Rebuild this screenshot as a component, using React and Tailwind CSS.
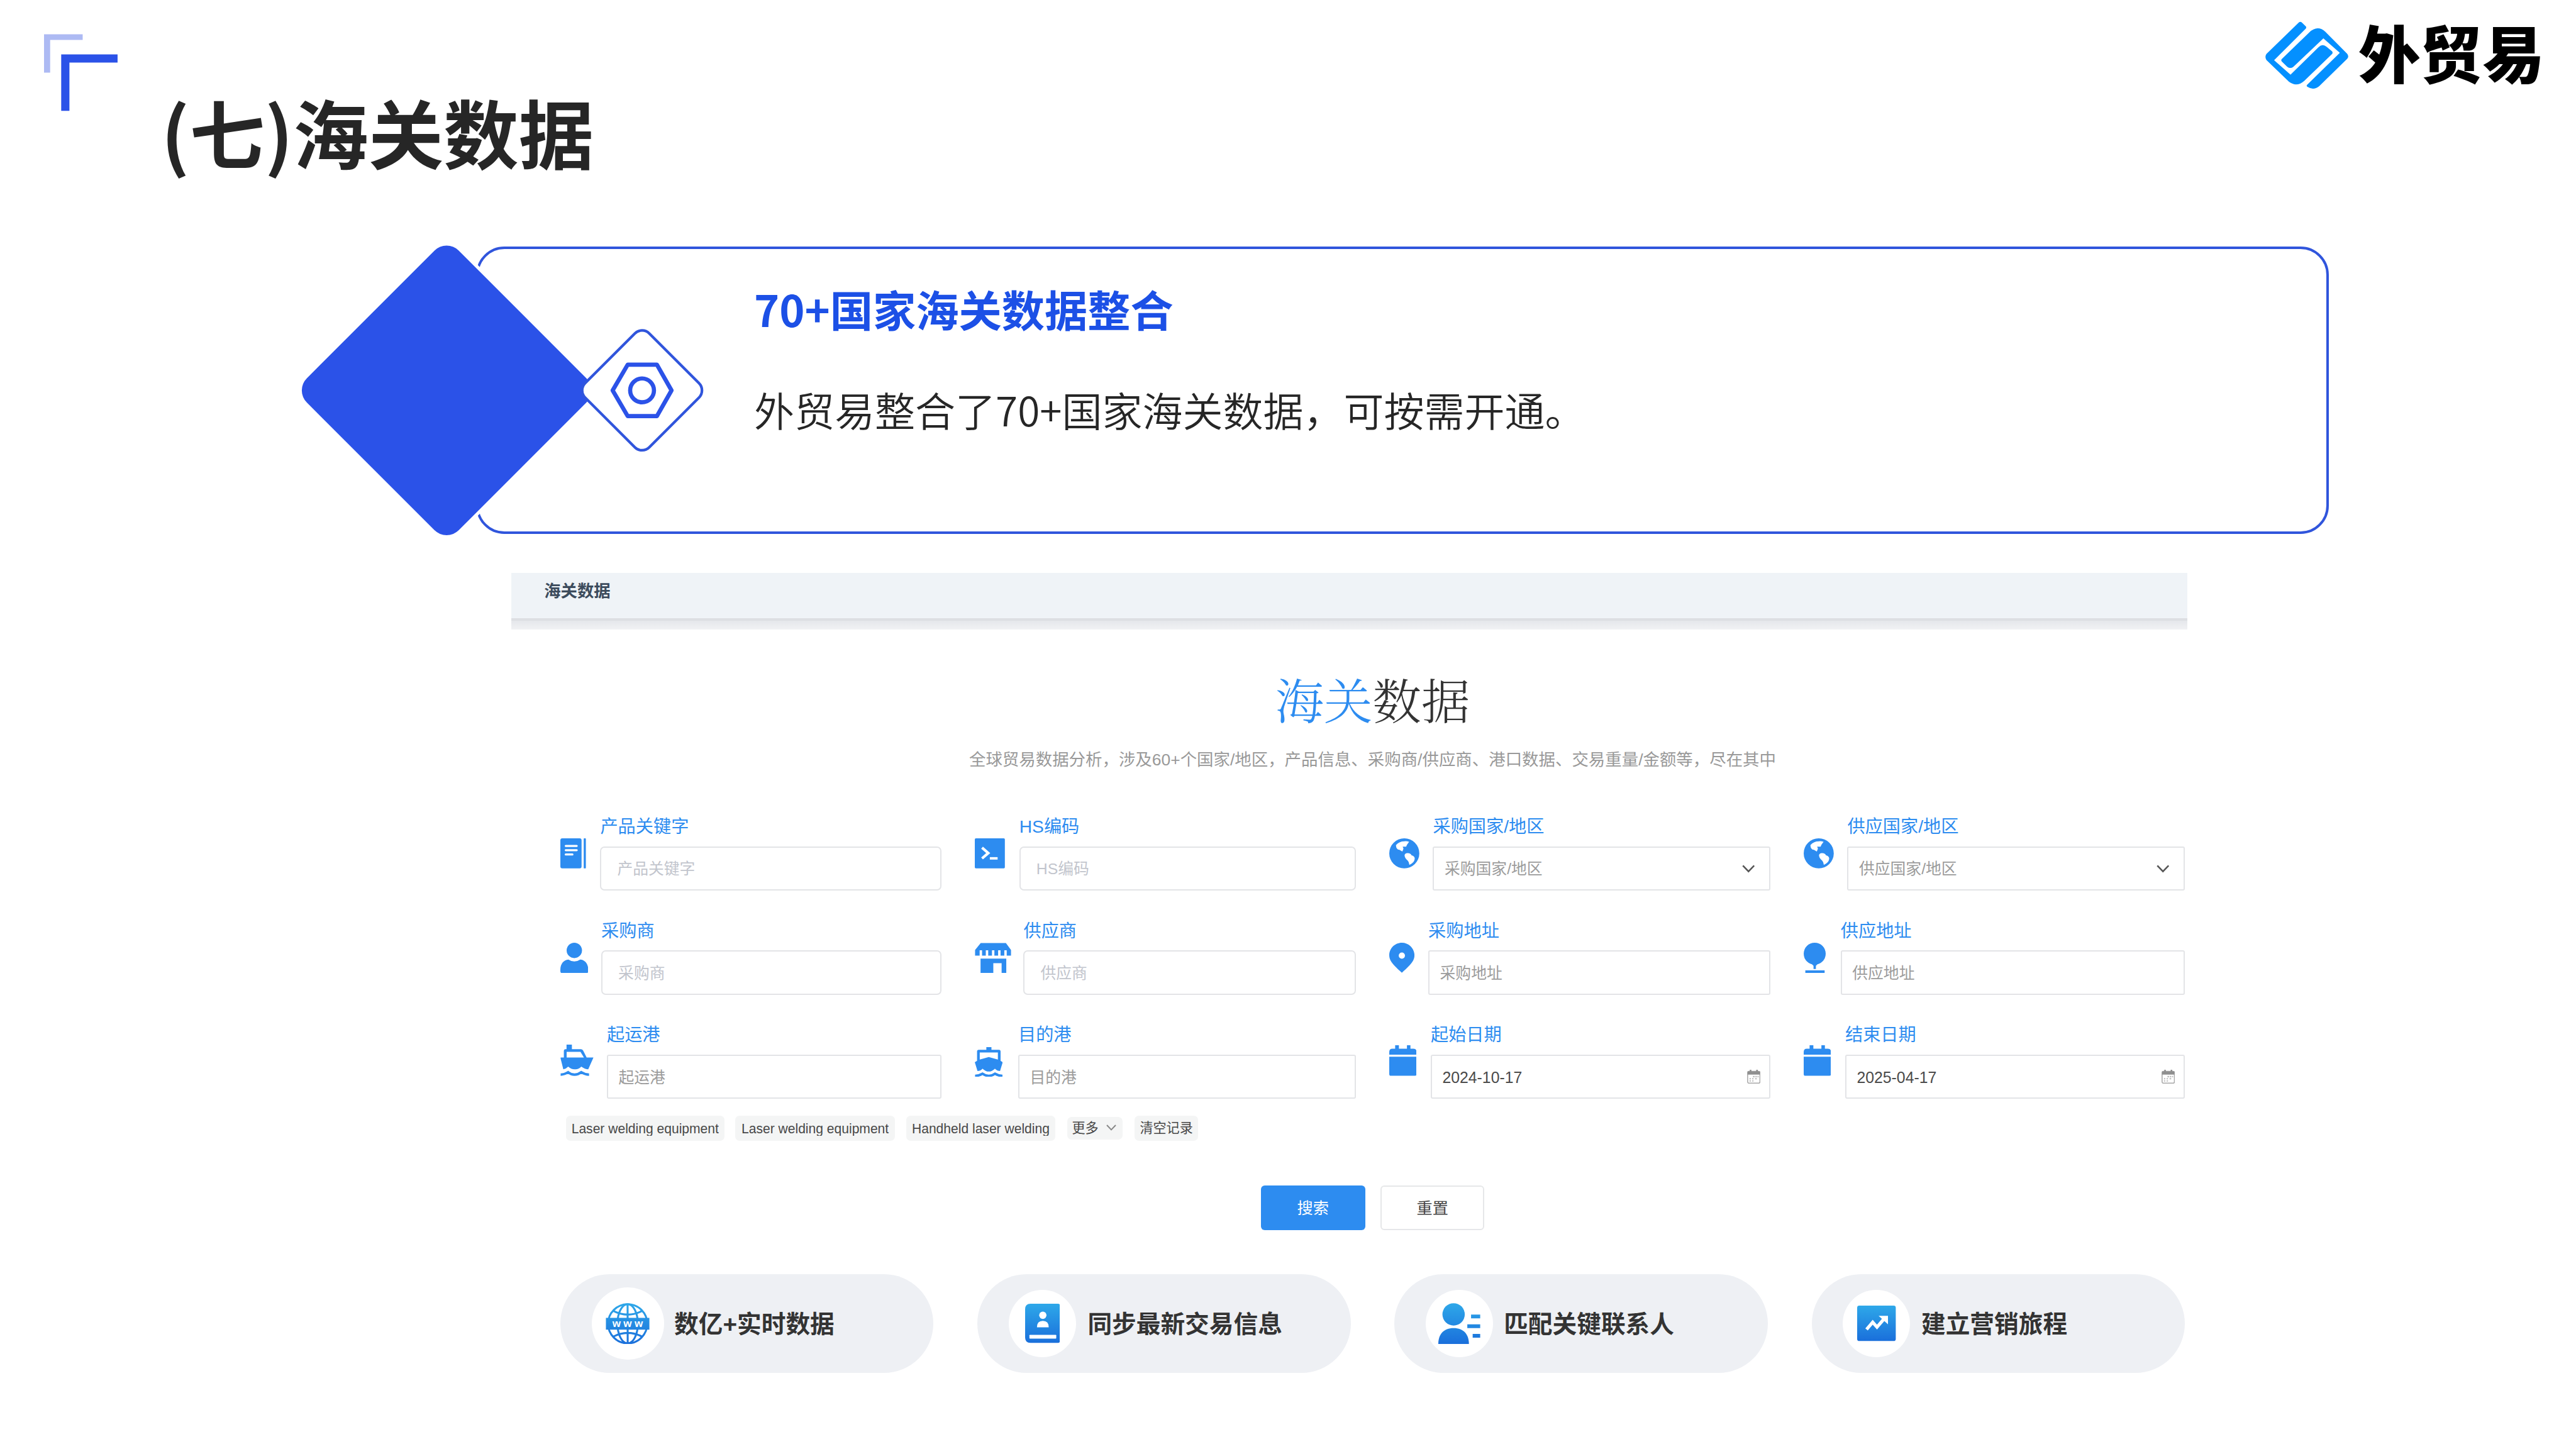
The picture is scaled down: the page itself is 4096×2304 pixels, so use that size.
const BLUE = '#2d8cf0';

function Brackets() {
  return (
    <svg viewBox="82 63 138 144" className="w-[117.8px] h-[122.9px]">
      <path d="M82 63.7h72v10.4H93.4v61H82z" fill="#adbaf3" />
      <path d="M114 101h105v15.2h-89.700v90H114z" fill="#2b52e8" />
    </svg>
  );
}

function LogoMark() {
  return (
    <svg viewBox="147 120 387.1 384" preserveAspectRatio="none" className="w-[134.8px] h-[109.2px]" fill="#0490ff">
      <path d="M302 127Q310 118 318 128L335 148Q339 155 334 161L190 337L265 418L393 264Q411 243 430 262L455 288Q459 295 455 302L328 452Q293 490 258 458L155 336Q146 318 155 302Z" />
      <path d="M350 182Q388 138 424 178L523 300Q534 315 523 330L396 482Q370 508 342 486Q336 480 341 474L490 296L415 215L278 374Q264 387 250 374L225 344Q220 336 226 329Z" />
    </svg>
  );
}

function DiamondArt() {
  return (
    <svg viewBox="556 450 762 556" className="absolute -left-[282.5px] -top-[8px] w-[650.2px] h-[474.5px]">
      <rect x="631.4" y="527.2" width="400.4" height="400.4" rx="32" transform="rotate(45 831.6 727.4)" fill="#2b52e8" stroke="#fff" strokeWidth="12" paintOrder="stroke" />
      <rect x="1111.3" y="642.900" width="169" height="169" rx="19" transform="rotate(45 1195.8 727.4)" fill="#fff" stroke="#3055dc" strokeWidth="5" />
      <path d="M1141 727.4L1169 679.5H1223.500L1250.700 727.4L1223.500 775.400H1169Z" fill="none" stroke="#2b52e8" strokeWidth="7.800" strokeLinejoin="round" />
      <circle cx="1195.8" cy="727.4" r="22.2" fill="none" stroke="#2b52e8" strokeWidth="7.800" />
    </svg>
  );
}

/* ---------- field icons ---------- */

function IconBook() {
  return (
    <svg viewBox="0 0 48 56" className="w-[41px] h-[47.800px]" fill={BLUE}>
      <rect width="39.500" height="56" rx="3.500" />
      <rect x="43.500" width="4" height="56" rx="1" />
      <path d="M10 14.100H30.500M10 22.100H30.500M10 30.100H22.500" stroke="#fff" strokeWidth="3.800" strokeLinecap="round" />
    </svg>
  );
}

function IconPerson() {
  return (
    <svg viewBox="0 0 52 57" className="w-[44.400px] h-[48.600px]" fill={BLUE}>
      <circle cx="26" cy="14.300" r="14.300" />
      <path d="M0 50C0 40 6 32 15 31.500Q20 35 26 35T37 31.500C46 32 52 40 52 50V53Q52 57 48 57H4Q0 57 0 53Z" />
    </svg>
  );
}

function IconShip() {
  return (
    <svg viewBox="0 0 62 59" className="w-[52.900px] h-[50.300px]" fill={BLUE}>
      <path d="M11.500 0H21.500V8.500H38Q41 8.500 42.500 11L49 24H61.700L52 46Q46 46 39 41Q33 47 26.500 46Q20 46 14.500 41Q11 45 5.500 46L0.500 26V24H6.500V12Q6.500 8.500 10 8.500H11.500ZM11.700 13.500V24H44L37.500 13.500Z" fillRule="evenodd" />
      <path d="M0.500 56Q7 56 14.500 51.500Q20 56 26.500 56T39 51.500Q46 56 53.500 56" fill="none" stroke={BLUE} strokeWidth="4.600" />
    </svg>
  );
}

function IconTerminal() {
  return (
    <svg viewBox="0 0 56 56" className="w-[47.800px] h-[47.800px]" fill="none">
      <rect width="56" height="56" rx="2" fill={BLUE} />
      <path d="M13.500 17.500L25 27.500L13.500 37.500" stroke="#fff" strokeWidth="5" />
      <path d="M28 37.300H42.500" stroke="#fff" strokeWidth="4.600" />
    </svg>
  );
}

function IconStore() {
  return (
    <svg viewBox="0 0 68 57" className="w-[58px] h-[48.600px]" fill={BLUE}>
      <path d="M11 0.500H58L67.500 13.500V24H59.500V14H55V24H48V14H43.500V24H36.500V14H32V24H25V14H20.500V24H13.500V14H9V24H0.500V13.500Z" />
      <path d="M10.700 29.500H58.700V57H50V38H34.500V57H10.700Z" />
    </svg>
  );
}

function IconFerry() {
  return (
    <svg viewBox="0 0 52 56" className="w-[44.400px] h-[47.800px]" fill={BLUE}>
      <path d="M21.500 0H31V5H45Q48 5 48 8V25.500L52 28L47 44.500Q42 44.500 37.500 40Q32 45.500 26 45.500T14.500 40Q10 44.500 5 44.500L0 28L4.200 25.500V8Q4.200 5 7.200 5H21.500ZM9.200 10V23L26 18.500L43 23V10Z" fillRule="evenodd" />
      <path d="M0.500 53.500Q8 53.500 14.500 49.500Q20 53.500 26 53.500T37.500 49.500Q44 53.500 51.500 53.500" fill="none" stroke={BLUE} strokeWidth="4.600" />
    </svg>
  );
}

function IconGlobe() {
  return (
    <svg viewBox="0 0 56 56" className="w-[47.800px] h-[47.800px]">
      <circle cx="28" cy="28" r="28" fill={BLUE} />
      <path d="M12.500 12.500Q19 5.500 28 5.500Q33 5 37 6.500L33 12L31.500 15.500H25L26.500 19L24.500 24.500L19 21.500Q12.500 20.500 12.500 12.500Z" fill="#fff" />
      <path d="M28.500 31Q30 27 34.500 27.500Q40 28 41.500 31.500Q47.500 33 47.500 38Q46.500 45.500 37.500 49.500Q37 44 34.500 41.500Q28.500 37 28.500 31Z" fill="#fff" />
    </svg>
  );
}

function IconPin() {
  return (
    <svg viewBox="0 0 47 56" className="w-[40.100px] h-[47.800px]" fill={BLUE}>
      <path d="M23.500 0C10.500 0 0 10.500 0 23.500C0 36 11.500 44.500 23.500 56C35.500 44.500 47 36 47 23.500C47 10.500 36.500 0 23.500 0Z" />
      <circle cx="23.500" cy="24" r="5.800" fill="#fff" />
    </svg>
  );
}

function IconTree() {
  return (
    <svg viewBox="0 0 41 57" className="w-[35px] h-[48.600px]" fill={BLUE}>
      <circle cx="20.500" cy="20.500" r="20.500" />
      <path d="M15 39.500H26L22.700 43V49H18.300V43Z" />
      <rect x="3" y="51.500" width="36" height="5.500" />
    </svg>
  );
}

function IconCalendar() {
  return (
    <svg viewBox="0 0 51 57" className="w-[43.500px] h-[48.600px]" fill={BLUE}>
      <path d="M11 0H18V6.500H33V0H39.500V6.500H45Q51 6.500 51 12.500V17.500H0V12.500Q0 6.500 6 6.500H11Z" />
      <path d="M0 21.500H51V54Q51 57 48 57H3Q0 57 0 54Z" />
    </svg>
  );
}

function Chevron({ className, color }) {
  return (
    <svg viewBox="0 0 24 15" className={className} fill="none" stroke={color} strokeWidth="3">
      <path d="M1.500 1.500L12 12.500L22.500 1.500" />
    </svg>
  );
}

function PickerIcon() {
  return (
    <svg viewBox="0 0 25 26" className="w-[21.300px] h-[22.200px]" fill="#8f8f8f">
      <rect x="1" y="3" width="23" height="22" rx="2.500" fill="#fff" stroke="#a8a8a8" strokeWidth="1.800" />
      <path d="M1 3H24V9H1Z" />
      <path d="M5 0H8V4H5ZM17 0H20V4H17Z" />
      <path d="M11 11.500H14V14H11ZM15.500 11.500H18V14H15.500ZM19.500 11.500H21.500V14H19.500ZM4.500 15.500H7V18H4.500ZM9.500 15.500H12V18H9.500ZM15 15.500H18V18H15ZM4.500 19.500H7V22H4.500ZM9.500 19.500H12V22H9.500Z" opacity="0.600" />
    </svg>
  );
}

/* ---------- search form ---------- */

const FIELDS = [
  { label: '产品关键字', Icon: IconBook, gutter: 'w-[63.6px]', soft: true },
  { label: 'HS编码', Icon: IconTerminal, gutter: 'w-[71px]', soft: true },
  { label: '采购国家/地区', Icon: IconGlobe, gutter: 'w-[69.7px]', kind: 'select' },
  { label: '供应国家/地区', Icon: IconGlobe, gutter: 'w-[69.7px]', kind: 'select' },
  { label: '采购商', Icon: IconPerson, gutter: 'w-[65.3px]', soft: true },
  { label: '供应商', Icon: IconStore, gutter: 'w-[77.7px]', soft: true },
  { label: '采购地址', Icon: IconPin, gutter: 'w-[62.3px]' },
  { label: '供应地址', Icon: IconTree, gutter: 'w-[59px]' },
  { label: '起运港', Icon: IconShip, gutter: 'w-[74.2px] pb-[4px]' },
  { label: '目的港', Icon: IconFerry, gutter: 'w-[69.2px]' },
  { label: '起始日期', Icon: IconCalendar, gutter: 'w-[66.2px] pb-[4px]', kind: 'date', value: '2024-10-17' },
  { label: '结束日期', Icon: IconCalendar, gutter: 'w-[66.2px] pb-[4px]', kind: 'date', value: '2025-04-17' },
];

function Field({ label, Icon, gutter, soft, kind, value }) {
  return (
    <div className="flex h-[116.100px]">
      <div className={['flex flex-none items-center h-[114.500px]', gutter].join(' ')}>
        <Icon />
      </div>
      <div className="flex-1">
        <div className="h-[30px] text-[28.2px] leading-[29.500px] text-[#2d8cf0]">{label}</div>
        <div
          className={[
            'mt-[15.400px] h-[70.700px] flex items-center justify-between border-[2.200px] border-[#e3e4e7] text-[24.800px] leading-none',
            soft ? 'rounded-[7px] pl-[25px] text-[#c2c5cd]' : 'rounded-[3px] pl-[16.500px]',
            !soft && !value ? 'text-[#9c9c9c]' : '',
            value ? 'text-[#4a4a4a]' : '',
          ].join(' ')}
        >
          <span className={value ? 'pt-[2px] scale-y-107' : 'pt-[4px]'}>{value || label}</span>
          {kind === 'select' && <Chevron className="w-[20.500px] h-[12.800px] mr-[23px] mt-[1px]" color="#555" />}
          {kind === 'date' && (
            <span className="mr-[14px]">
              <PickerIcon />
            </span>
          )}
        </div>
      </div>
    </div>
  );
}

const TAG = 'flex items-center justify-center rounded-[7px] bg-[#f4f5f5] text-[21.070px] leading-none text-[#484848] whitespace-nowrap pb-[2px]';

function Tags() {
  return (
    <div className="mt-[26.700px] ml-[9.200px] flex items-center h-[40px]">
      <span className={[TAG, 'h-[40px] w-[251.600px]'].join(' ')}>
        <span className="scale-y-107">Laser welding equipment</span>
      </span>
      <span className={[TAG, 'ml-[17.400px] h-[40px] w-[254.300px]'].join(' ')}>
        <span className="scale-y-107">Laser welding equipment</span>
      </span>
      <span className={[TAG, 'ml-[17.400px] h-[40px] w-[237.600px]'].join(' ')}>
        <span className="scale-y-107">Handheld laser welding</span>
      </span>
      <span className={[TAG, 'ml-[18.800px] h-[35.500px] w-[88px] gap-[12px] pr-[3px]'].join(' ')}>
        更多
        <Chevron className="w-[16px] h-[10px]" color="#888" />
      </span>
      <span className={[TAG, 'ml-[18.800px] h-[40px] w-[101.500px]'].join(' ')}>清空记录</span>
    </div>
  );
}

/* ---------- feature pills ---------- */

function Gradient({ id }) {
  return (
    <linearGradient id={id} x1="0" y1="0" x2="0" y2="1">
      <stop offset="0" stopColor="#2ea8e9" />
      <stop offset="1" stopColor="#1a6fdb" />
    </linearGradient>
  );
}

function IconWww() {
  return (
    <svg viewBox="0 0 82 77" className="w-[70px] h-[65.700px]">
      <defs>
        <linearGradient id="www" gradientUnits="userSpaceOnUse" x1="0" y1="0" x2="0" y2="77">
          <stop offset="0" stopColor="#2ea8e9" />
          <stop offset="1" stopColor="#1a6fdb" />
        </linearGradient>
      </defs>
      <g fill="none" stroke="url(#www)" strokeWidth="3.600">
        <circle cx="41" cy="38.500" r="36.500" />
        <ellipse cx="41" cy="38.500" rx="19" ry="36.500" />
        <path d="M40.900 2L41.100 75M13 14Q41 29 69 14M13 63Q41 48 69 63" />
      </g>
      <rect x="0.500" y="27.500" width="81" height="22" fill="url(#www)" />
      <text x="41" y="44" textAnchor="middle" fontSize="20" fontWeight="700" letterSpacing="5" fill="#fff" dx="2.500">www</text>
    </svg>
  );
}

function IconContactBook() {
  return (
    <svg viewBox="0 0 65 73" className="w-[55.500px] h-[62.300px]">
      <defs><Gradient id="cbook" /></defs>
      <path d="M10 0H61Q65 0 65 4V69Q65 73 61 73H10Q0 73 0 63V10Q0 0 10 0Z" fill="url(#cbook)" />
      <circle cx="33" cy="21.500" r="6.800" fill="#fff" />
      <path d="M22 44Q22 32 33 32T44 44Z" fill="#fff" />
      <rect x="8" y="58" width="50" height="7" rx="1" fill="#fff" />
    </svg>
  );
}

function IconContacts() {
  return (
    <svg viewBox="0 0 78 76" className="w-[66.600px] h-[64.900px]">
      <defs>
        <linearGradient id="contact" gradientUnits="userSpaceOnUse" x1="0" y1="0" x2="0" y2="76">
          <stop offset="0" stopColor="#2ea8e9" />
          <stop offset="1" stopColor="#1a6fdb" />
        </linearGradient>
      </defs>
      <g fill="url(#contact)">
        <circle cx="28.500" cy="21" r="20.800" />
        <path d="M0 76C0 58 10 46.500 28.500 46.500S57 58 57 76Z" />
        <path d="M61 21.500H78V28.500H61ZM54 39.500H78V46.500H54ZM64 57.500H78V64.500H64Z" />
      </g>
    </svg>
  );
}

function IconTrend() {
  return (
    <svg viewBox="0 0 72 66" className="w-[61.400px] h-[56.300px]">
      <defs><Gradient id="trend" /></defs>
      <rect width="72" height="66" rx="4" fill="url(#trend)" />
      <path d="M17.500 44.500L29 31L37 40L49.500 25.500" fill="none" stroke="#fff" strokeWidth="6" />
      <path d="M40 19H57.500V35Z" fill="#fff" />
    </svg>
  );
}

const FEATURES = [
  { text: '数亿+实时数据', Icon: IconWww, disc: 'w-[115px] h-[115px] mr-[16.500px]' },
  { text: '同步最新交易信息', Icon: IconContactBook, disc: 'w-[107px] h-[107px] mr-[18.500px]' },
  { text: '匹配关键联系人', Icon: IconContacts, disc: 'w-[107px] h-[107px] mr-[17px]' },
  { text: '建立营销旅程', Icon: IconTrend, disc: 'w-[107px] h-[107px] mr-[17.500px]' },
];

function Feature({ text, Icon, disc }) {
  return (
    <div className="flex items-center w-[593.500px] h-[157px] pl-[49.800px] rounded-full bg-[#eef0f4]">
      <div className={['flex flex-none items-center justify-center rounded-full bg-white', disc].join(' ')}>
        <Icon />
      </div>
      <span className="pt-[4px] text-[38.700px] font-bold leading-none text-[#333] whitespace-nowrap">{text}</span>
    </div>
  );
}

export default function App() {
  return (
    <div className="w-[4096px] h-[2304px] overflow-hidden bg-white font-['Noto_Sans_CJK_SC',sans-serif]">
      {/* Slide title and brand */}
      <header className="flex items-start h-[392px] pl-[70px] pr-[50px]">
        <div className="mt-[53.800px]"><Brackets /></div>
        <h1 className="ml-[68.500px] mt-[148px] text-[119.500px] font-bold leading-none text-[#262626] whitespace-nowrap">(七)海关数据</h1>
        <div className="ml-auto mt-[34px] flex items-start gap-[14px]">
          <LogoMark />
          <span className="-mt-[2px] text-[98.700px] font-black leading-none text-black">外贸易</span>
        </div>
      </header>

      {/* Highlight banner */}
      <section className="relative ml-[757px] w-[2946px] h-[457.300px]">
        <div className="h-full rounded-[45px] border-[4.300px] border-[#3055dc] pl-[438px] pt-[60.500px]">
          <h2 className="text-[68.270px] font-bold leading-none text-[#1c50e6]">70+国家海关数据整合</h2>
          <p className="mt-[93.600px] text-[64px] font-[350] leading-none text-[#262626]">外贸易整合了70+国家海关数据，可按需开通。</p>
        </div>
        <DiamondArt />
      </section>

      {/* Customs data screen */}
      <main className="mt-[61.300px] ml-[813.200px] w-[2665px] font-['Liberation_Sans','Noto_Sans_CJK_SC',sans-serif]">
        <div className="h-[72.500px] bg-[#eff3f7] pl-[52px] pt-[16.700px] text-[26.400px] font-bold leading-none text-[#3c4b5c]">海关数据</div>
        <div className="h-[4.300px] bg-[#dddfe3]" />
        <div className="h-[13.400px] bg-linear-to-b from-[#e5e7eb] to-[#f1f2f4]" />

        <div className="ml-[77.600px] w-[2583.400px]">
          <h2 className="mt-[71.500px] text-center text-[77.500px] font-light leading-none text-[#333] font-['Noto_Serif_CJK_SC','Noto_Sans_CJK_SC',serif]">
            <span className="text-[#2d8cf0]">海关</span>数据
          </h2>
          <p className="mt-[44.900px] text-center text-[26.450px] leading-none text-[#999]">
            全球贸易数据分析，涉及60+个国家/地区，产品信息、采购商/供应商、港口数据、交易重量/金额等，尽在其中
          </p>

          <div className="mt-[79px] grid grid-cols-4 gap-x-[52.600px] gap-y-[49.500px]">
            {FIELDS.map((field) => (
              <Field key={field.label} {...field} />
            ))}
          </div>

          <Tags />

          <div className="mt-[70.900px] flex justify-center gap-[24.500px] text-[25.200px] leading-none">
            <button className="w-[166px] h-[71px] rounded-[6px] bg-[#2d8cf0] pt-[3px] text-white">搜索</button>
            <button className="w-[165px] h-[71px] rounded-[6px] border-[2.200px] border-[#e6e7e9] pt-[3px] text-[#444]">重置</button>
          </div>

          <div className="mt-[70px] flex justify-between">
            {FEATURES.map((feature) => (
              <Feature key={feature.text} {...feature} />
            ))}
          </div>
        </div>
      </main>
    </div>
  );
}
